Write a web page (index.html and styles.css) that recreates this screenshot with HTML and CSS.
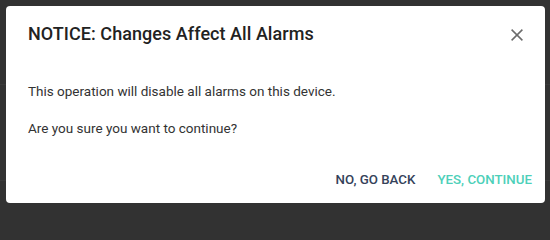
FILE: index.html
```html
<!DOCTYPE html>
<html lang="en">
<head>
<meta charset="utf-8">
<title>Notice</title>
<link rel="stylesheet" href="styles.css">
</head>
<body>
<div class="dialog" role="dialog" aria-labelledby="dlg-title">
  <div class="dialog-header">
    <h2 class="dialog-title" id="dlg-title">NOTICE: Changes Affect All Alarms</h2>
    <button class="close-btn" aria-label="Close">
      <svg width="12" height="12" viewBox="0 0 12 12"><path d="M0.6 0.6L11.4 11.4M11.4 0.6L0.6 11.4" stroke="#6b6b6b" stroke-width="1.5" fill="none"/></svg>
    </button>
  </div>
  <div class="dialog-body">
    <p>This operation will disable all alarms on this device.</p>
    <p>Are you sure you want to continue?</p>
  </div>
  <div class="dialog-actions">
    <button class="btn btn-back">NO, GO BACK</button>
    <button class="btn btn-continue">YES, CONTINUE</button>
  </div>
</div>
</body>
</html>
```
FILE: styles.css
```css
html, body {
  margin: 0;
  padding: 0;
}
body {
  width: 550px;
  height: 208px;
  overflow: hidden;
  background-color: #323232;
  background-image:
    linear-gradient(to bottom, transparent 84px, #3a3a3a 84px, #3a3a3a 85px, transparent 85px),
    linear-gradient(to bottom, transparent 180px, #3a3a3a 180px, #3a3a3a 181px, transparent 181px);
  font-family: Roboto, "Liberation Sans", sans-serif;
  padding: 6px;
  box-sizing: border-box;
}
.dialog {
  width: 539px;
  height: 197px;
  background: #ffffff;
  border-radius: 4px;
  box-sizing: border-box;
  padding: 0 0 0 22px;
  display: flex;
  flex-direction: column;
}
.dialog-header {
  display: flex;
  align-items: center;
  justify-content: space-between;
  height: 56px;
  padding-right: 22px;
}
.dialog-title {
  margin: 0;
  font-size: 18px;
  font-weight: 500;
  color: #222222;
  line-height: 24px;
  letter-spacing: 0.05px;
}
.close-btn {
  border: 0;
  background: transparent;
  padding: 0;
  margin-top: 2px;
  width: 12px;
  height: 12px;
  display: flex;
  cursor: pointer;
}
.dialog-body {
  padding-top: 19px;
  color: #333333;
  font-size: 13.5px;
  line-height: 20px;
}
.dialog-body p {
  margin: 0 0 17px 0;
}
.dialog-actions {
  margin-top: auto;
  display: flex;
  justify-content: flex-end;
  gap: 22px;
  padding: 0 13px 13px 0;
}
.btn {
  border: 0;
  background: transparent;
  padding: 0;
  font-family: Roboto, "Liberation Sans", sans-serif;
  font-size: 13.3px;
  font-weight: 500;
  line-height: 20px;
  letter-spacing: 0;
  cursor: pointer;
}
.btn-back {
  color: #34425a;
}
.btn-continue {
  color: #4dd0b9;
}
```
